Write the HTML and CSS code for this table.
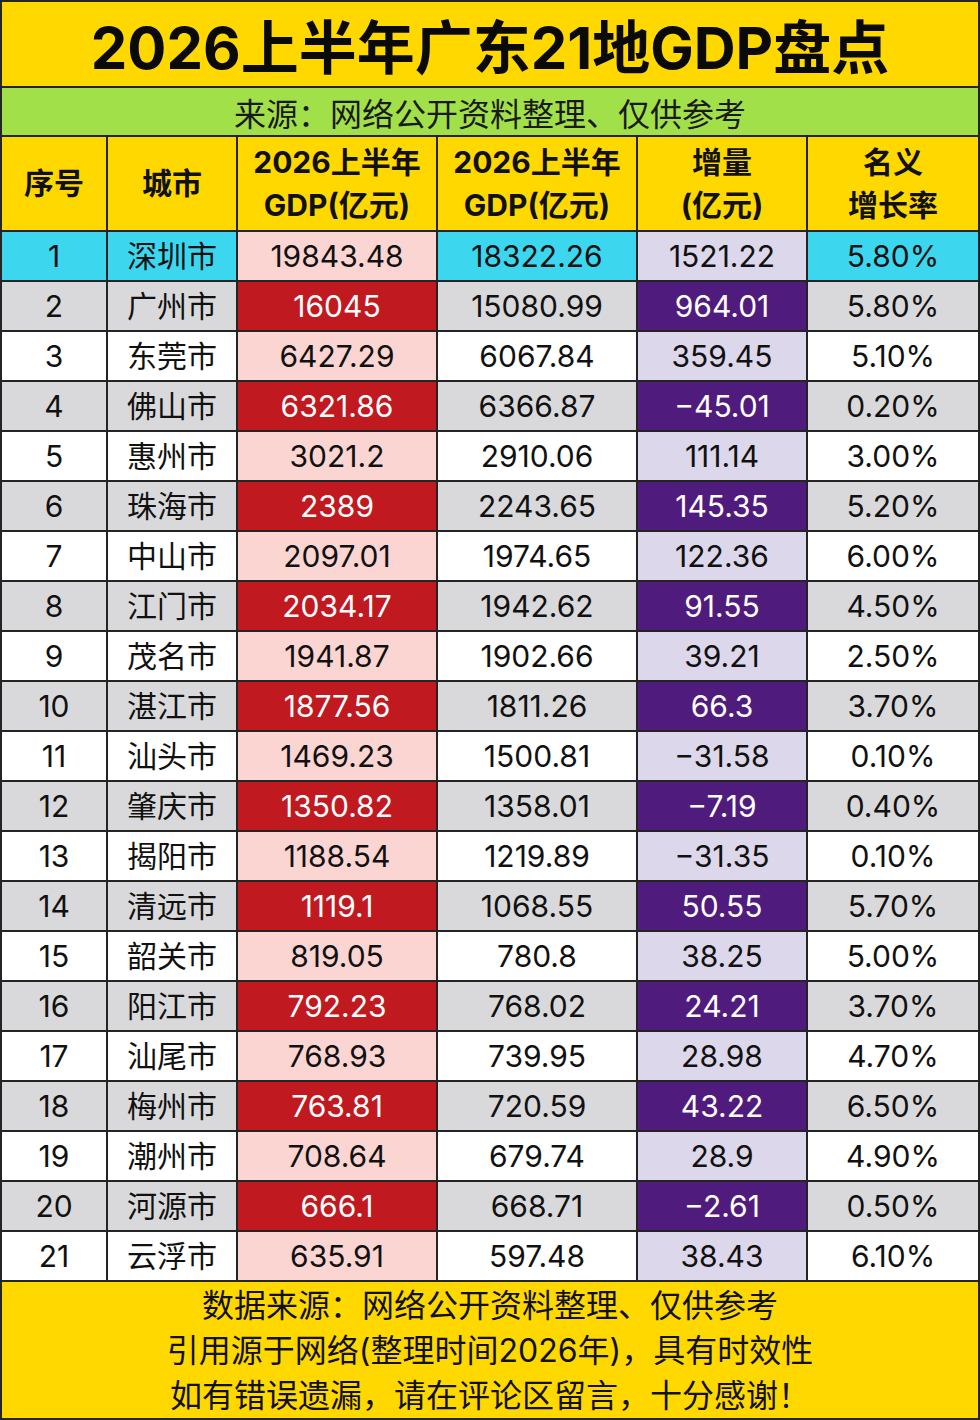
FILE: index.html
```html
<!DOCTYPE html>
<html lang="zh-CN">
<head>
<meta charset="utf-8">
<title>2026上半年广东21地GDP盘点</title>
<link rel="stylesheet" href="styles.css">
</head>
<body>
<div class="sheet">
  <div class="title">2026上半年广东21地GDP盘点</div>
  <div class="subtitle">来源：网络公开资料整理、仅供参考</div>
  <div class="grid">
    <div class="c head">序号</div>
    <div class="c head">城市</div>
    <div class="c head">2026上半年<br>GDP(亿元)</div>
    <div class="c head">2026上半年<br>GDP(亿元)</div>
    <div class="c head">增量<br>(亿元)</div>
    <div class="c head">名义<br>增长率</div>

    <div class="c cy">1</div><div class="c cy">深圳市</div><div class="c pk">19843.48</div><div class="c cy">18322.26</div><div class="c lv">1521.22</div><div class="c cy">5.80%</div>
    <div class="c gy">2</div><div class="c gy">广州市</div><div class="c rd">16045</div><div class="c gy">15080.99</div><div class="c pu">964.01</div><div class="c gy">5.80%</div>
    <div class="c wh">3</div><div class="c wh">东莞市</div><div class="c pk">6427.29</div><div class="c wh">6067.84</div><div class="c lv">359.45</div><div class="c wh">5.10%</div>
    <div class="c gy">4</div><div class="c gy">佛山市</div><div class="c rd">6321.86</div><div class="c gy">6366.87</div><div class="c pu">−45.01</div><div class="c gy">0.20%</div>
    <div class="c wh">5</div><div class="c wh">惠州市</div><div class="c pk">3021.2</div><div class="c wh">2910.06</div><div class="c lv">111.14</div><div class="c wh">3.00%</div>
    <div class="c gy">6</div><div class="c gy">珠海市</div><div class="c rd">2389</div><div class="c gy">2243.65</div><div class="c pu">145.35</div><div class="c gy">5.20%</div>
    <div class="c wh">7</div><div class="c wh">中山市</div><div class="c pk">2097.01</div><div class="c wh">1974.65</div><div class="c lv">122.36</div><div class="c wh">6.00%</div>
    <div class="c gy">8</div><div class="c gy">江门市</div><div class="c rd">2034.17</div><div class="c gy">1942.62</div><div class="c pu">91.55</div><div class="c gy">4.50%</div>
    <div class="c wh">9</div><div class="c wh">茂名市</div><div class="c pk">1941.87</div><div class="c wh">1902.66</div><div class="c lv">39.21</div><div class="c wh">2.50%</div>
    <div class="c gy">10</div><div class="c gy">湛江市</div><div class="c rd">1877.56</div><div class="c gy">1811.26</div><div class="c pu">66.3</div><div class="c gy">3.70%</div>
    <div class="c wh">11</div><div class="c wh">汕头市</div><div class="c pk">1469.23</div><div class="c wh">1500.81</div><div class="c lv">−31.58</div><div class="c wh">0.10%</div>
    <div class="c gy">12</div><div class="c gy">肇庆市</div><div class="c rd">1350.82</div><div class="c gy">1358.01</div><div class="c pu">−7.19</div><div class="c gy">0.40%</div>
    <div class="c wh">13</div><div class="c wh">揭阳市</div><div class="c pk">1188.54</div><div class="c wh">1219.89</div><div class="c lv">−31.35</div><div class="c wh">0.10%</div>
    <div class="c gy">14</div><div class="c gy">清远市</div><div class="c rd">1119.1</div><div class="c gy">1068.55</div><div class="c pu">50.55</div><div class="c gy">5.70%</div>
    <div class="c wh">15</div><div class="c wh">韶关市</div><div class="c pk">819.05</div><div class="c wh">780.8</div><div class="c lv">38.25</div><div class="c wh">5.00%</div>
    <div class="c gy">16</div><div class="c gy">阳江市</div><div class="c rd">792.23</div><div class="c gy">768.02</div><div class="c pu">24.21</div><div class="c gy">3.70%</div>
    <div class="c wh">17</div><div class="c wh">汕尾市</div><div class="c pk">768.93</div><div class="c wh">739.95</div><div class="c lv">28.98</div><div class="c wh">4.70%</div>
    <div class="c gy">18</div><div class="c gy">梅州市</div><div class="c rd">763.81</div><div class="c gy">720.59</div><div class="c pu">43.22</div><div class="c gy">6.50%</div>
    <div class="c wh">19</div><div class="c wh">潮州市</div><div class="c pk">708.64</div><div class="c wh">679.74</div><div class="c lv">28.9</div><div class="c wh">4.90%</div>
    <div class="c gy">20</div><div class="c gy">河源市</div><div class="c rd">666.1</div><div class="c gy">668.71</div><div class="c pu">−2.61</div><div class="c gy">0.50%</div>
    <div class="c wh">21</div><div class="c wh">云浮市</div><div class="c pk">635.91</div><div class="c wh">597.48</div><div class="c lv">38.43</div><div class="c wh">6.10%</div>
  </div>
  <div class="footer">
    <p>数据来源：网络公开资料整理、仅供参考</p>
    <p>引用源于网络(整理时间2026年)，具有时效性</p>
    <p>如有错误遗漏，请在评论区留言，十分感谢！</p>
  </div>
</div>
</body>
</html>
```

FILE: styles.css
```css
html, body {
  margin: 0;
  padding: 0;
  background: #222;
}
body {
  font-family: Inter, "Noto Sans CJK SC", sans-serif;
  color: #111;
}
.sheet {
  width: 980px;
  height: 1420px;
  box-sizing: border-box;
  padding: 2px;
  background: #242424;
  display: flex;
  flex-direction: column;
  gap: 2px;
}
.title {
  height: 84px;
  background: #ffd800;
  display: flex;
  align-items: center;
  justify-content: center;
  font-weight: 700;
  font-size: 58px;
  color: #0a0a0a;
}
.subtitle {
  height: 47px;
  background: #a2e04a;
  display: flex;
  align-items: center;
  justify-content: center;
  font-size: 32px;
  color: #1a1a1a;
}
.grid {
  display: grid;
  grid-template-columns: 104px 128px 198px 198px 168px 170px;
  grid-template-rows: 93px repeat(21, 48px);
  gap: 2px;
}
.c {
  display: flex;
  align-items: center;
  justify-content: center;
  text-align: center;
  font-size: 30px;
  line-height: 1;
}
.head {
  background: #ffd800;
  font-weight: 700;
  line-height: 43px;
  font-size: 30px;
  color: #111;
}
.cy { background: #3dd6ef; }
.gy { background: #d9d9db; }
.wh { background: #ffffff; }
.pk { background: #fbd5d2; }
.lv { background: #dcd7ea; }
.rd { background: #c01a20; color: #fff; }
.pu { background: #4f1c7e; color: #fff; }
.footer {
  flex: 1;
  background: #ffd800;
  display: flex;
  flex-direction: column;
  align-items: center;
  justify-content: center;
  font-size: 32px;
  color: #111;
}
.footer p {
  margin: 0;
  line-height: 45px;
}
```
